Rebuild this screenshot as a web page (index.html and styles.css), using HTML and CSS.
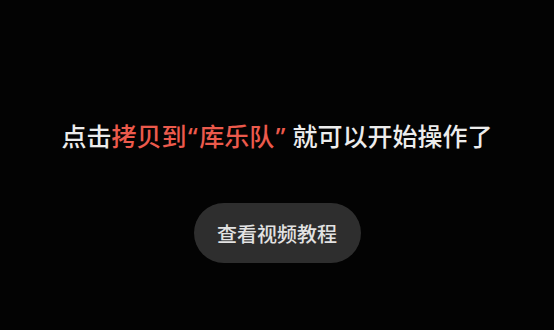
FILE: index.html
```html
<!DOCTYPE html>
<html lang="zh-CN">
<head>
    <meta charset="UTF-8">
    <meta name="viewport" content="width=device-width, initial-scale=1.0">
    <title>库乐队</title>
    <link rel="stylesheet" href="styles.css">
</head>
<body>
    <div class="screen">
        <p class="hint">点击<span class="accent">拷贝到<span class="quote">“</span>库乐队<span class="quote">”</span></span> 就可以开始操作了</p>
        <button class="video-btn">查看视频教程</button>
    </div>
</body>
</html>
```
FILE: styles.css
```css
html, body {
    margin: 0;
    padding: 0;
    background-color: #030303;
}

.screen {
    width: 554px;
    height: 330px;
    display: flex;
    flex-direction: column;
    align-items: center;
    font-family: "Noto Sans CJK SC", "Noto Sans", sans-serif;
}

.hint {
    margin: 119px 0 0;
    font-size: 25px;
    font-weight: 500;
    line-height: 32px;
    color: #ececec;
    white-space: nowrap;
}

.accent {
    color: #ec5a4c;
}

.quote {
    font-family: "Noto Sans", sans-serif;
    padding: 0 1.5px;
}

.video-btn {
    margin-top: 51px;
    width: 167px;
    height: 60px;
    border: none;
    border-radius: 30px;
    background-color: #2e2e2e;
    color: #e2e2e2;
    font-family: inherit;
    font-size: 20px;
    font-weight: 500;
    padding: 0;
}
```
